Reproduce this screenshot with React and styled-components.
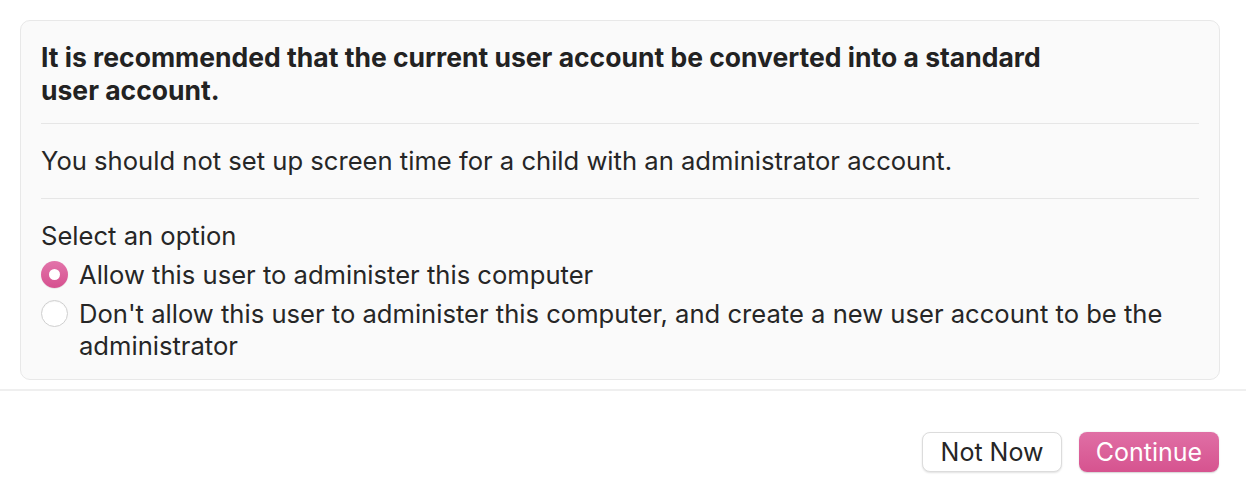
import React, { useState } from "react";
import styled, { createGlobalStyle, css } from "styled-components";

const GlobalStyle = createGlobalStyle`
  html, body {
    margin: 0;
    padding: 0;
    background: #ffffff;
  }
  body {
    font-family: Inter, "Noto Sans", "Liberation Sans", sans-serif;
    color: #262626;
    -webkit-font-smoothing: antialiased;
  }
`;

const Page = styled.div`
  width: 1246px;
  height: 496px;
  display: flex;
  flex-direction: column;
  box-sizing: border-box;
  padding-top: 20px;
`;

const Card = styled.section`
  margin: 0 26px 0 20px;
  background: #fafafa;
  border: 1px solid #e8e8e8;
  border-radius: 10px;
  padding: 20px 20px 17px;
`;

const Heading = styled.h1`
  margin: 0;
  max-width: 1012px;
  font-size: 26.5px;
  line-height: 33px;
  font-weight: 700;
  color: #222222;
`;

const Divider = styled.hr`
  border: none;
  height: 1px;
  background: #e6e6e6;
  margin: ${(p) => p.$margin || "22px 0"};
`;

const Body = styled.p`
  margin: 0;
  font-size: 25.6px;
  line-height: 30px;
`;

const Options = styled.div`
  display: flex;
  flex-direction: column;
  gap: 7px;
`;

const Label = styled.div`
  font-size: 25.6px;
  line-height: 30px;
  margin-bottom: 8px;
`;

const RadioRow = styled.label`
  display: flex;
  align-items: flex-start;
  gap: 11px;
  font-size: 25.6px;
  line-height: 32px;
  cursor: default;
`;

const Radio = styled.span`
  flex-shrink: 0;
  width: 27px;
  height: 27px;
  margin-top: 2px;
  border-radius: 50%;
  box-sizing: border-box;
  display: flex;
  align-items: center;
  justify-content: center;
  ${(p) =>
    p.$checked
      ? css`
          background: linear-gradient(180deg, #e274aa 0%, #d6508f 100%);
          box-shadow: 0 0.5px 1px rgba(0, 0, 0, 0.15);
          &::after {
            content: "";
            width: 11px;
            height: 11px;
            border-radius: 50%;
            background: #ffffff;
          }
        `
      : css`
          background: #ffffff;
          border: 1px solid #cfcfcf;
          box-shadow: inset 0 1px 1px rgba(0, 0, 0, 0.04);
        `}
`;

const Separator = styled.div`
  height: 2px;
  background: #efefef;
  margin-top: 9px;
`;

const Footer = styled.footer`
  display: flex;
  justify-content: flex-end;
  gap: 17px;
  padding: 41px 27px 0 0;
`;

const Button = styled.button`
  height: 40px;
  width: 140px;
  border-radius: 8px;
  font-family: inherit;
  font-size: 25px;
  padding: 0;
  cursor: pointer;
  ${(p) =>
    p.$primary
      ? css`
          border: none;
          color: #ffffff;
          background: linear-gradient(180deg, #e06fa5 0%, #d6538f 100%);
          box-shadow: 0 0.5px 1.5px rgba(0, 0, 0, 0.18);
        `
      : css`
          border: 1px solid #dcdcdc;
          color: #262626;
          background: #ffffff;
          box-shadow: 0 1px 2px rgba(0, 0, 0, 0.12);
        `}
`;

const options = [
  "Allow this user to administer this computer",
  "Don't allow this user to administer this computer, and create a new user account to be the administrator",
];

export default function App() {
  const [selected, setSelected] = useState(0);
  return (
    <>
      <GlobalStyle />
      <Page>
        <Card>
          <Heading>
            It is recommended that the current user account be converted into a
            standard user account.
          </Heading>
          <Divider $margin="16px 0 22px" />
          <Body>
            You should not set up screen time for a child with an administrator
            account.
          </Body>
          <Divider />
          <Label>Select an option</Label>
          <Options>
            {options.map((text, i) => (
              <RadioRow key={i} onClick={() => setSelected(i)}>
                <Radio $checked={selected === i} />
                <span>{text}</span>
              </RadioRow>
            ))}
          </Options>
        </Card>
        <Separator />
        <Footer>
          <Button>Not Now</Button>
          <Button $primary>Continue</Button>
        </Footer>
      </Page>
    </>
  );
}
